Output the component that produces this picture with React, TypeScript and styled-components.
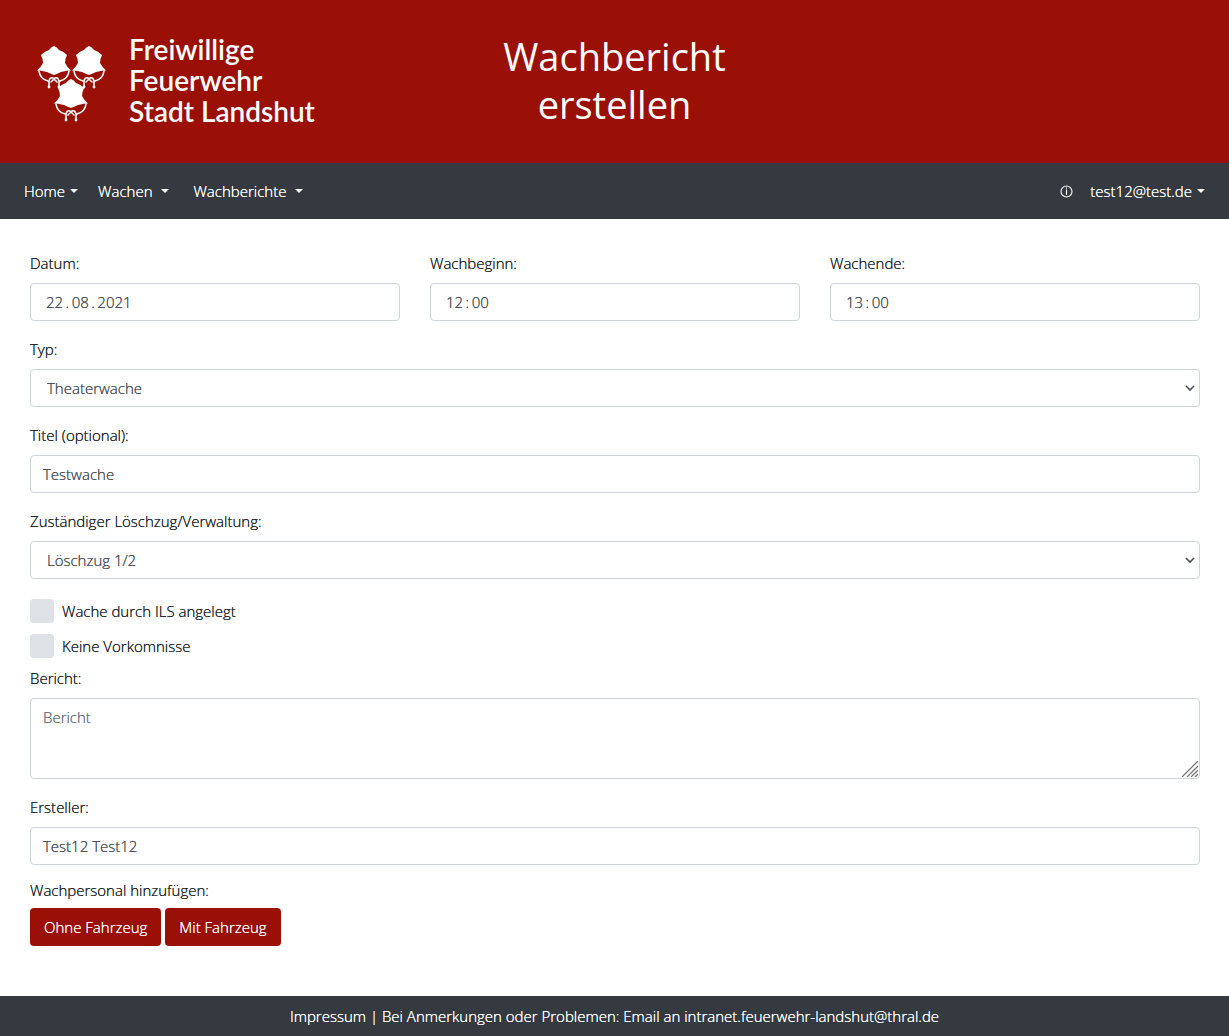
import React from "react";
import styled, { createGlobalStyle } from "styled-components";

const RED = "#9b1006";
const DARK = "#343a40";

const GlobalStyle = createGlobalStyle`
  *, *::before, *::after { box-sizing: border-box; }
  body {
    margin: 0;
    background: #fff;
    color: #212529;
    font: 300 15px/24px "Open Sans", "Noto Sans", sans-serif;
  }
  body, button, input, select, textarea {
    text-shadow: 0 0 0 currentColor;
  }
`;

const Page = styled.div`
  min-height: 100vh;
  display: flex;
  flex-direction: column;
`;

const Header = styled.header`
  display: grid;
  grid-template-columns: repeat(3, minmax(0, 1fr));
  align-items: center;
  padding: 32px 30px 35px;
  background: ${RED};
  color: #fff;
  text-shadow: none;
`;

const Brand = styled.a`
  display: flex;
  align-items: center;
  gap: 17px;
  color: #fff;
  text-decoration: none;
`;

const Emblem = styled.svg`
  flex: none;
  width: 82px;
  height: 86px;
`;

const BrandName = styled.span`
  font: 600 28px/31px Lato, sans-serif;
  white-space: nowrap;
`;

const Title = styled.h1`
  margin: 0;
  padding: 0 60px;
  font-size: 38px;
  font-weight: 400;
  line-height: 48px;
  text-align: center;
`;

const Nav = styled.nav`
  display: flex;
  align-items: center;
  gap: 20px;
  height: 56px;
  padding: 0 24px;
  background: ${DARK};
`;

const NavButton = styled.button<{ $spaced?: boolean }>`
  display: flex;
  align-items: center;
  gap: ${(p) => (p.$spaced ? 9 : 5)}px;
  margin: 0 ${(p) => (p.$spaced ? 4 : 0)}px 0 0;
  padding: 0;
  border: 0;
  background: none;
  color: #fff;
  font: inherit;

  &::after {
    content: "";
    border-top: 4px solid;
    border-left: 4px solid transparent;
    border-right: 4px solid transparent;
  }
`;

const NavEnd = styled.div`
  display: flex;
  align-items: center;
  gap: 17px;
  margin-left: auto;
`;

const InfoLink = styled.a`
  display: flex;
  color: #fff;
`;

const Form = styled.form`
  flex: 1;
  padding: 32px 29px 50px 30px;
`;

const Columns = styled.div`
  display: grid;
  grid-template-columns: repeat(3, minmax(0, 1fr));
  gap: 30px;
`;

const Group = styled.div`
  margin-bottom: 16px;
`;

const Label = styled.label`
  display: block;
  margin-bottom: 8px;
`;

const Control = styled.input<{ $inset?: number }>`
  display: block;
  width: 100%;
  height: 38px;
  padding: 6px ${(p) => p.$inset ?? 12}px;
  border: 1px solid #ced4da;
  border-radius: 4px;
  background: #fff;
  color: #495057;
  font: inherit;
  outline: 0;
`;

const TextArea = styled(Control).attrs({ as: "textarea" })`
  height: 81px;
  resize: none;
  &::placeholder { color: #6c757d; opacity: 1; }
`;

const Select = styled(Control).attrs({ as: "select" })`
  appearance: none;
`;

const Overlaid = styled.div`
  position: relative;
`;

const Chevron = styled.svg`
  position: absolute;
  right: 5px;
  top: 15px;
  pointer-events: none;
`;

const Grip = styled.svg`
  position: absolute;
  right: 2px;
  bottom: 2px;
  pointer-events: none;
`;

const Checks = styled.div`
  display: grid;
  gap: 11px;
  padding: 4px 0 8px;
`;

const CheckLabel = styled.label`
  display: flex;
  align-items: center;
  gap: 8px;
`;

const Checkbox = styled.input.attrs({ type: "checkbox" })`
  appearance: none;
  width: 24px;
  height: 24px;
  margin: 0;
  border-radius: 4px;
  background: #dee2e6;
  &:checked { background: ${RED}; }
`;

const Staff = styled.fieldset`
  min-width: 0;
  margin: -3px 0 0;
  padding: 0;
  border: 0;
`;

const Legend = styled.legend`
  margin-bottom: 6px;
  padding: 0;
`;

const Actions = styled.div`
  display: flex;
  gap: 4px;
`;

const Button = styled.button`
  height: 38px;
  padding: 0 14px;
  border: 0;
  border-radius: 4px;
  background: ${RED};
  color: #fff;
  font: inherit;
`;

const Footer = styled.footer`
  padding: 8px 16px;
  background: ${DARK};
  color: #fff;
  text-align: center;
`;

const FooterLink = styled.a`
  color: inherit;
  text-decoration: none;
`;

const helmets = [
  [24, 9],
  [59, 9],
  [41, 42],
];

function Helmet({ x, y }: { x: number; y: number }) {
  return (
    <g transform={`translate(${x} ${y})`}>
      <path
        fill="#fff"
        d="M0 0Q3 1 5 4Q9 5 13 9Q11 13 11 17Q13 21 17 24.5Q8 25 5 27L0 29-5 27Q-8 25-17 24.5Q-13 21-11 17Q-11 13-13 9Q-9 5-5 4Q-3 1 0 0Z"
      />
      <path
        fill="none"
        stroke="#fff"
        strokeWidth="1.6"
        strokeLinecap="round"
        strokeLinejoin="round"
        d="M-15 25Q-14 33-6 35M15 25Q14 33 6 35M-5 41V35Q-4 31-1 32L3 36M5 41V35Q4 31 1 32L-3 36"
      />
      <circle cx="-5" cy="41" r="1.4" fill="#fff" />
      <circle cx="5" cy="41" r="1.4" fill="#fff" />
    </g>
  );
}

function SelectField({ id, label, options }: { id: string; label: string; options: string[] }) {
  return (
    <Group>
      <Label htmlFor={id}>{label}</Label>
      <Overlaid>
        <Select id={id} $inset={16}>
          {options.map((o) => (
            <option key={o}>{o}</option>
          ))}
        </Select>
        <Chevron width="10" height="8" viewBox="0 0 10 8" fill="none" stroke="#495057" strokeWidth="1.6" aria-hidden="true">
          <path d="M1 2 5 6 9 2" />
        </Chevron>
      </Overlaid>
    </Group>
  );
}

function InputField({ id, label, value, inset }: { id: string; label: string; value: string; inset?: number }) {
  return (
    <Group>
      <Label htmlFor={id}>{label}</Label>
      <Control id={id} type="text" defaultValue={value} $inset={inset} />
    </Group>
  );
}

export default function App() {
  return (
    <Page>
      <GlobalStyle />
      <Header>
        <Brand href="#">
          <Emblem viewBox="0 0 82 86" aria-hidden="true">
            {helmets.map(([x, y]) => (
              <Helmet key={x} x={x} y={y} />
            ))}
          </Emblem>
          <BrandName>
            Freiwillige
            <br />
            Feuerwehr
            <br />
            Stadt Landshut
          </BrandName>
        </Brand>
        <Title>Wachbericht erstellen</Title>
      </Header>
      <Nav>
        <NavButton type="button">Home</NavButton>
        <NavButton type="button" $spaced>Wachen</NavButton>
        <NavButton type="button" $spaced>Wachberichte</NavButton>
        <NavEnd>
          <InfoLink href="#" aria-label="Info">
            <svg width="13" height="13" viewBox="0 0 13 13" fill="none" stroke="currentColor" strokeWidth="1.1">
              <circle cx="6.5" cy="6.5" r="5.5" />
              <path d="M6.5 4.6V10M6.5 2.6V3.8" />
            </svg>
          </InfoLink>
          <NavButton type="button">test12@test.de</NavButton>
        </NavEnd>
      </Nav>
      <Form onSubmit={(e) => e.preventDefault()}>
        <Columns>
          <InputField id="datum" label="Datum:" value={"22\u2009.\u200908\u2009.\u20092021"} inset={15} />
          <InputField id="beginn" label="Wachbeginn:" value={"12\u2009:\u200900"} inset={15} />
          <InputField id="ende" label="Wachende:" value={"13\u2009:\u200900"} inset={15} />
        </Columns>
        <SelectField id="typ" label="Typ:" options={["Theaterwache"]} />
        <InputField id="titel" label="Titel (optional):" value="Testwache" />
        <SelectField id="zug" label="Zuständiger Löschzug/Verwaltung:" options={["Löschzug 1/2"]} />
        <Checks>
          <CheckLabel>
            <Checkbox />
            Wache durch ILS angelegt
          </CheckLabel>
          <CheckLabel>
            <Checkbox />
            Keine Vorkomnisse
          </CheckLabel>
        </Checks>
        <Group>
          <Label htmlFor="bericht">Bericht:</Label>
          <Overlaid>
            <TextArea id="bericht" placeholder="Bericht" />
            <Grip width="16" height="16" viewBox="0 0 16 16" stroke="#777" strokeWidth="1.3" aria-hidden="true">
              <path d="M0 16 16 0M5 16 16 5M9 16 16 9M13 16 16 13" />
            </Grip>
          </Overlaid>
        </Group>
        <InputField id="ersteller" label="Ersteller:" value="Test12 Test12" />
        <Staff>
          <Legend>Wachpersonal hinzufügen:</Legend>
          <Actions>
            <Button type="button">Ohne Fahrzeug</Button>
            <Button type="button">Mit Fahrzeug</Button>
          </Actions>
        </Staff>
      </Form>
      <Footer>
        <FooterLink href="#">Impressum</FooterLink> | Bei Anmerkungen oder Problemen: Email an{" "}
        <FooterLink href="mailto:intranet.feuerwehr-landshut@thral.de">intranet.feuerwehr-landshut@thral.de</FooterLink>
      </Footer>
    </Page>
  );
}
